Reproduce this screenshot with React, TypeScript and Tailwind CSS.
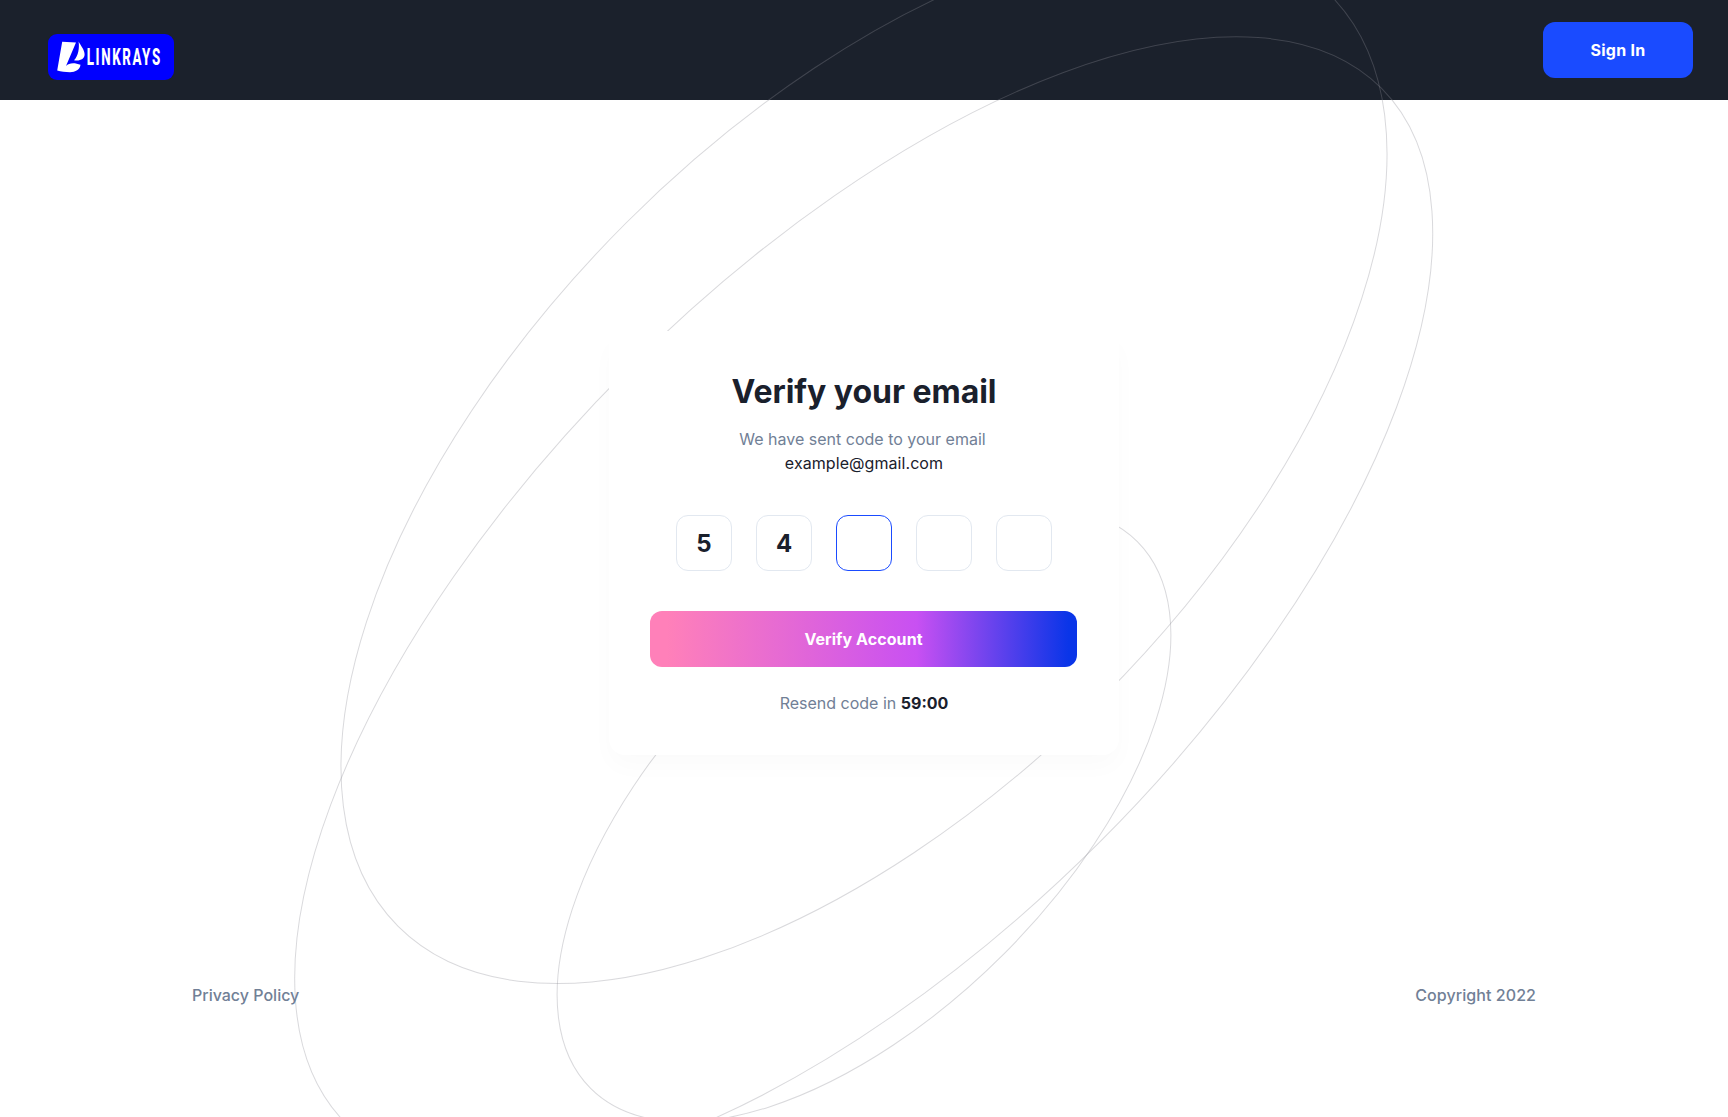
import React from "react";

const orbits = [
  { cx: 864, cy: 460.5, rx: 658.8, ry: 336.2 },
  { cx: 863.7, cy: 605.8, rx: 732.1, ry: 334 },
  { cx: 864, cy: 815, rx: 386.6, ry: 197.2 },
];

const code = ["5", "4", "", "", ""];

function Orbits() {
  return (
    <svg
      className="pointer-events-none absolute inset-0"
      width="1728"
      height="1117"
      viewBox="0 0 1728 1117"
      fill="none"
      aria-hidden="true"
    >
      {orbits.map((o) => (
        <ellipse
          key={o.cy}
          cx={o.cx}
          cy={o.cy}
          rx={o.rx}
          ry={o.ry}
          transform={`rotate(-45 ${o.cx} ${o.cy})`}
          stroke="#8d8d94"
          strokeOpacity="0.33"
        />
      ))}
    </svg>
  );
}

function Logo() {
  return (
    <svg width="126" height="46" viewBox="0 0 126 46" role="img" aria-label="Linkrays">
      <rect width="126" height="46" rx="9" fill="#0000ff" />
      <path d="M14.2 7.8L28 8.6L18 32C21 28.5 27 28.6 32.5 30.8C32 35.5 27.5 38.3 22 38.3C17.5 38.3 13 37.5 9.2 36.6Z" fill="#fff" />
      <path d="M30.6 7.5C33 12 36.6 16 36.6 20.5C36.6 25 32 27.3 26 26.3C30.5 21.5 31.5 14 30.6 7.5Z" fill="#fff" />
      <text
        transform="translate(38.8 31) scale(0.578 1)"
        fontSize="23"
        fontWeight="800"
        fontFamily="Roboto, sans-serif"
        fill="#fff"
        letterSpacing="2.8"
      >
        LINKRAYS
      </text>
    </svg>
  );
}

export default function App() {
  return (
    <div className="relative flex h-[1117px] w-[1728px] flex-col overflow-hidden bg-white font-['Inter',sans-serif] text-base text-[#1a202c]">
      <header className="flex h-[100px] shrink-0 items-center justify-between bg-[#1b212c] pr-[35px] pl-12">
        <div className="mt-3.5">
          <Logo />
        </div>
        <button className="h-14 w-[150px] rounded-xl bg-[#1a4bff] font-bold tracking-[0.3px] text-white">Sign In</button>
      </header>

      <Orbits />

      <main className="relative mx-auto mt-[231px] flex h-[424px] w-[510px] shrink-0 flex-col items-center rounded-2xl bg-white px-[41px] pt-[40px] shadow-[0_12px_24px_rgba(0,0,0,0.02)]">
        <h1 className="text-[32px] leading-[42px] font-bold tracking-[-0.03px]">Verify your email</h1>
        <p className="mt-[14px] text-center leading-6 text-[#718096]">
          <span className="mr-[3px]">We have sent code to your email</span>
          <br />
          <span className="tracking-[0.07px] text-[#1a202c]">example@gmail.com</span>
        </p>
        <div className="mt-10 flex gap-6">
          {code.map((digit, i) => (
            <div
              key={i}
              className={
                i === 2
                  ? "flex size-14 items-center justify-center rounded-xl border border-[#1a4bff] pt-0.5 text-2xl font-bold"
                  : "flex size-14 items-center justify-center rounded-xl border border-[#e2e8f0] pt-0.5 text-2xl font-bold"
              }
            >
              {digit}
            </div>
          ))}
        </div>
        <button className="mt-10 h-14 w-[427px] shrink-0 self-start rounded-xl bg-[linear-gradient(90deg,#ff80b9_4%,#c850f2_62.500%,#0a35e8_98%)] font-bold tracking-[0.07px] text-white">
          Verify Account
        </button>
        <p className="mt-6 leading-6 text-[#718096]">
          Resend code in <span className="font-bold text-[#1a202c]">59:00</span>
        </p>
      </main>

      <footer className="relative mt-[228px] flex justify-between px-48 leading-6 font-medium text-[#718096]">
        <span>Privacy Policy</span>
        <span className="tracking-[0.07px]">Copyright 2022</span>
      </footer>
    </div>
  );
}
